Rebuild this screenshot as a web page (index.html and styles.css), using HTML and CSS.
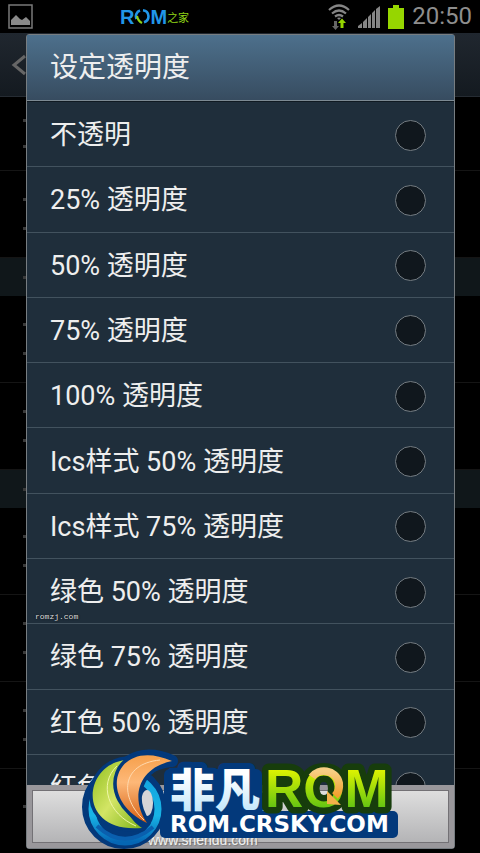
FILE: index.html
```html
<!DOCTYPE html>
<html lang="zh-CN">

<head>
    <meta charset="UTF-8">
    <meta name="viewport" content="width=device-width, initial-scale=1.0">
    <title>设定透明度</title>

    <link rel="stylesheet" href="styles.css">
</head>

<body>
    <header class="status-bar">
        <svg class="picture-icon" width="26" height="26" viewBox="0 0 26 26">
            <rect x="1" y="1" width="23" height="23" fill="none" stroke="#7a7a7a" stroke-width="1.5" />
            <path d="M3 21v-5l5-5 4 4 2 1 4-3 4 4v4z" fill="#8a8a8a" />
        </svg>
        <div class="brand"><span class="brand-rom">R<svg width="16" height="17" viewBox="0 0 16 17">
            <path d="M6 2.500A6.200 6.200 0 0 0 2.500 11" fill="none" stroke="#2196e8" stroke-width="2.600" />
            <path d="M9 2.200A6.200 6.200 0 0 1 10 14.300" fill="none" stroke="#2196e8" stroke-width="2.600" />
            <path d="M3 8q1 5 5 7" fill="none" stroke="#8fd416" stroke-width="2.200" />
        </svg>M</span><span class="brand-home">之家</span></div>
        <div class="indicators">
            <svg width="22" height="26" viewBox="0 0 22 26">
                <g fill="none" stroke="#858585" stroke-width="2.200">
                    <path d="M1 6q10-9 20 0" />
                    <path d="M4 9.500q7-6 14 0" />
                    <path d="M7 12.500q4-3 8 0" />
                </g>
                <path d="M11 16l-2-2q2-1 4 0z" fill="#858585" />
                <path d="M6 17h3v5h2l-3.500 4L4 22h2z" fill="#666" />
                <path d="M12.500 24v-5h-2.500l4-4.500 4 4.500h-2.500v5z" fill="#96d600" />
            </svg>
            <svg width="22" height="22" viewBox="0 0 22 22">
                <path d="M0 22v-2l4-3v5zM5 22v-6l4-4v10zM10 22V11l3-3v14zM14 22V7l3-3v18zM18 22V3l4-3v22z" fill="#858585" />
            </svg>
            <svg width="16" height="24" viewBox="0 0 16 24">
                <path d="M5 0h6v3h5v21H0V3h5z" fill="#96d600" />
            </svg>
            <span class="clock">20:50</span>
        </div>
    </header>

    <main class="settings">
        <div class="action-bar">
            <svg width="15" height="24" viewBox="0 0 15 24">
                <path d="M14 3L3 12l11 9" fill="none" stroke="#666" stroke-width="3" />
            </svg>
        </div>
        <div class="setting"><i></i><i></i></div>
        <div class="setting tall"><i></i><i></i></div>
        <div class="section"><i></i></div>
        <div class="setting tall"><i></i><i></i></div>
        <div class="setting tall"><i></i><i></i></div>
        <div class="section"><i></i></div>
        <div class="setting tall"><i></i><i></i></div>
        <div class="setting tall"><i></i><i></i></div>
        <div class="setting tall"><i></i><i></i></div>
        <div class="setting last"><i></i></div>
    </main>

    <form class="dialog">
        <h1>设定透明度</h1>
        <div class="options">
            <label>不透明<input type="radio" name="alpha"></label>
            <label>25% 透明度<input type="radio" name="alpha"></label>
            <label>50% 透明度<input type="radio" name="alpha"></label>
            <label>75% 透明度<input type="radio" name="alpha"></label>
            <label>100% 透明度<input type="radio" name="alpha"></label>
            <label>Ics样式 50% 透明度<input type="radio" name="alpha"></label>
            <label>Ics样式 75% 透明度<input type="radio" name="alpha"></label>
            <label>绿色 50% 透明度<input type="radio" name="alpha"></label>
            <label>绿色 75% 透明度<input type="radio" name="alpha"></label>
            <label>红色 50% 透明度<input type="radio" name="alpha"></label>
            <label>红色<input type="radio" name="alpha"></label>
        </div>
        <div class="actions">
            <button type="button" aria-label="取消"></button>
        </div>
    </form>

    <span class="mark-romzj">romzj.com</span>
    <span class="mark-shendu">www.shendu.com</span>

    <svg class="logo" width="320" height="103" viewBox="80 748 320 103">
        <defs>
            <linearGradient id="lime" x1="0" y1="0" x2="1" y2="1">
                <stop offset="0" stop-color="#8fbe1c" />
                <stop offset=".5" stop-color="#d3e565" />
                <stop offset="1" stop-color="#7fb51a" />
            </linearGradient>
            <linearGradient id="orange" x1="0" y1="0" x2="0" y2="1">
                <stop offset="0" stop-color="#f6a04c" />
                <stop offset=".4" stop-color="#fdb878" />
                <stop offset="1" stop-color="#d55f12" />
            </linearGradient>
            <linearGradient id="ring" x1="0" y1="0" x2="0" y2="1">
                <stop offset="0" stop-color="#12a5e0" />
                <stop offset=".6" stop-color="#18b4e6" />
                <stop offset="1" stop-color="#0566b4" />
            </linearGradient>
            <linearGradient id="ice" x1="0" y1="0" x2="0" y2="1">
                <stop offset=".3" stop-color="#fff" />
                <stop offset="1" stop-color="#b5e2fa" />
            </linearGradient>
            <linearGradient id="green" x1="0" y1="0" x2="0" y2="1">
                <stop offset=".15" stop-color="#e4f500" />
                <stop offset=".85" stop-color="#5fc313" />
            </linearGradient>
            <linearGradient id="gold" x1="0" y1="0" x2="0" y2="1">
                <stop offset="0" stop-color="#f8cf83" />
                <stop offset="1" stop-color="#f0a02c" />
            </linearGradient>
        </defs>

        <g stroke="#03397b" stroke-width="12" stroke-linejoin="round" fill="#03397b">
            <circle cx="124" cy="807" r="36" />
            <path d="M172 761C120 738 92 795 147 823C122 800 134 764 172 761z" />
            <path d="M170 775h86v34h-86z" />
        </g>
        <rect x="160" y="811" width="238" height="27" rx="5" fill="#03397b" />
        <circle cx="125" cy="809" r="33" fill="none" stroke="url(#ring)" stroke-width="7" />
        <path d="M97 826Q124 851 153 827" fill="none" stroke="#0a5fae" stroke-width="4" />
        <ellipse cx="147" cy="803" rx="6" ry="13" fill="#d5d5d7" />
        <g stroke="#03397b" stroke-width="7" stroke-linejoin="round" paint-order="stroke">
            <path d="M126 760C82 764 76 834 142 828C126 818 108 785 126 760z" fill="url(#lime)" />
            <path d="M172 761C116 736 94 798 147 823C130 798 138 768 172 761z" fill="url(#orange)" />
        </g>
        <path d="M117 766C98 784 108 814 136 826" fill="none" stroke="#eff7a8" stroke-width="1" />
        <path d="M160 760C120 764 120 798 144 820" fill="none" stroke="#ffd9ae" stroke-width="1" />

        <text class="cn" x="170" y="807">非凡</text>
        <text class="rom" x="265" y="807">ROM</text>
        <path d="M312 777C318 768 336 769 339 783Q340 791 335 796" fill="none" stroke="url(#gold)" stroke-width="8" />
        <path d="M327 791v13l14 1z" fill="#f3b14a" />
        <text class="site" x="170" y="832">ROM.CRSKY.COM</text>
    </svg>
</body>

</html>
```

FILE: styles.css
```css
* {
    box-sizing: border-box;
}

body {
    position: relative;
    display: flex;
    flex-direction: column;
    min-height: 100vh;
    margin: 0;
    overflow: hidden;
    background-color: #000;
    color: #eee;
    font-family: Roboto, 'Noto Sans CJK SC', sans-serif;
}

.status-bar {
    display: grid;
    grid-template-columns: 112px 1fr auto;
    align-items: center;
    height: 33px;
    padding: 0 8px;
}

.brand {
    display: flex;
    align-items: center;
}

.brand-rom {
    display: flex;
    align-items: center;
    color: #2196e8;
    font: bold 20px/24px 'Liberation Sans', sans-serif;
}

.brand-home {
    color: #8fd416;
    font-size: 11px;
}

.indicators {
    display: flex;
    justify-content: flex-end;
    align-items: center;
    gap: 8px;
}

.clock {
    color: #8e8e8e;
    font-size: 24px;
    line-height: 33px;
}

.action-bar {
    display: flex;
    align-items: center;
    height: 64px;
    padding-left: 11px;
    background: linear-gradient(#20272f, #141a20);
    border-bottom: 1px solid #262c33;
}

.setting,
.section {
    display: flex;
    flex-direction: column;
    justify-content: space-evenly;
    padding-left: 23px;
}

.setting {
    height: 74px;
    border-bottom: 1px solid #151515;
}

.setting.tall {
    height: 87px;
}

.section {
    height: 38px;
    background-color: #10171a;
}

.setting.last {
    border: none;
}

.settings i {
    width: 3px;
    height: 3px;
    background-color: #3a3a3a;
}

.dialog {
    position: absolute;
    top: 34px;
    right: 25px;
    bottom: 4px;
    left: 26px;
    display: flex;
    flex-direction: column;
    margin: 0;
    border: 1px solid #777d81;
    border-radius: 3px;
    background-color: #1f2e3b;
}

.dialog h1 {
    flex: none;
    height: 66px;
    margin: 0;
    padding-left: 23px;
    border-bottom: 1px solid #7d8a93;
    background: linear-gradient(#4d708c, #374c60);
    font-size: 28px;
    font-weight: 400;
    line-height: 66px;
}

.options {
    display: grid;
    grid-auto-rows: calc(100% / 10.46);
    flex: 1;
    min-height: 0;
    overflow: hidden;
    border-top: 1px solid #101a22;
}

.options label {
    display: flex;
    justify-content: space-between;
    align-items: center;
    padding: 2px 28px 0 23px;
    border-bottom: 1px solid #42525e;
    font-size: 27px;
    line-height: 36px;
}

.options input {
    appearance: none;
    width: 31px;
    height: 31px;
    margin: 0;
    border: 1px solid #747c82;
    border-radius: 50%;
    background-color: #10171d;
}

.actions {
    flex: none;
    display: flex;
    height: 63px;
    padding: 5px;
    background-color: #99979b;
}

.actions button {
    flex: 1;
    border: 1px solid #737175;
    background: linear-gradient(#dedede, #b4b4b6);
}

.mark-romzj {
    position: absolute;
    bottom: 230px;
    left: 35px;
    color: #ddd;
    font: 8px/12px 'Liberation Mono', monospace;
    text-shadow: 0 0 2px #000;
}

.mark-shendu {
    position: absolute;
    bottom: 4px;
    left: 148px;
    color: #f2f2f2;
    font: 14px/18px 'Liberation Sans', sans-serif;
    text-shadow: 1px 1px 1px #777;
}

.logo {
    position: absolute;
    bottom: 2px;
    left: 50%;
    margin-left: -160px;
}

.logo text {
    paint-order: stroke;
    stroke-linejoin: round;
}

.cn {
    fill: url(#ice);
    stroke: #03397b;
    stroke-width: 12px;
    font: 900 45px 'Noto Sans CJK SC', sans-serif;
}

.rom {
    fill: url(#green);
    stroke: #173d0c;
    stroke-width: 13px;
    font: bold 53px 'Liberation Sans', sans-serif;
}

.site {
    fill: #fff;
    font: bold 23px 'DejaVu Sans', sans-serif;
}
```
